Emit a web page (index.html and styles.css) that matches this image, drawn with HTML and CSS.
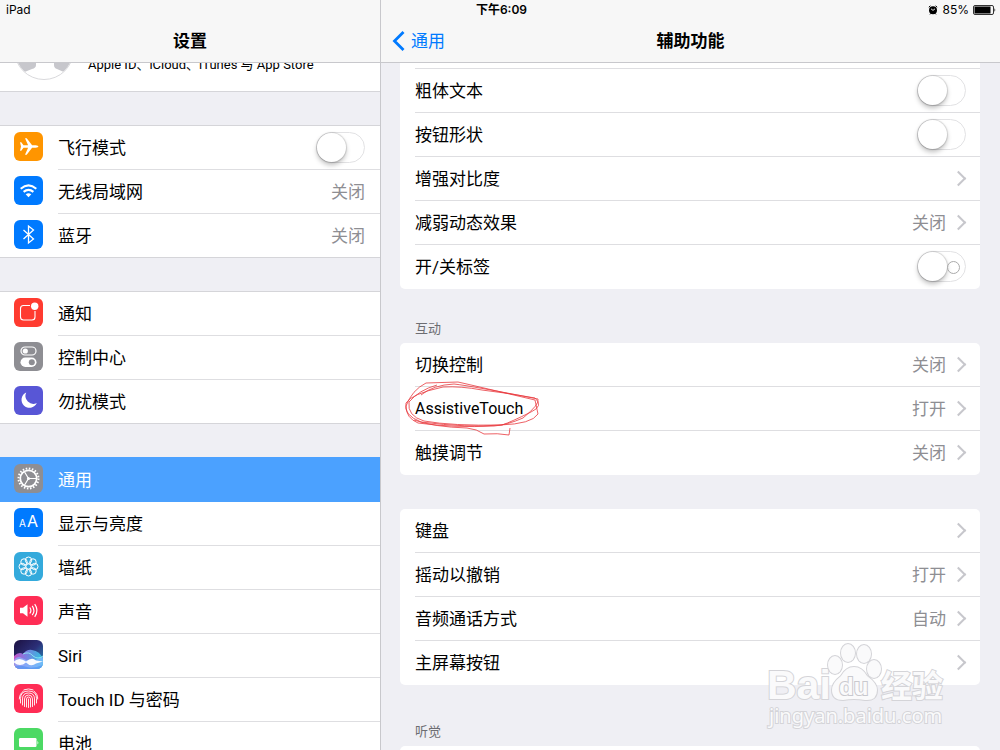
FILE: index.html
```
<!DOCTYPE html>
<html lang="zh-CN">
<head>
  <meta charset="UTF-8">
  <title>辅助功能</title>
  <link rel="stylesheet" href="styles.css">
</head>
<body>

  <!-- 状态栏 -->
  <div class="status-bar">
    <span>iPad</span>
    <time class="status-time">下午6:09</time>
    <div class="status-right">
      <svg width="10" height="10" viewBox="0 0 10 10"><circle cx="5" cy="5.2" r="4"/><path d="M.8 2.2L2.4.8M9.200 2.200L7.600.8M2 9.400l.8-1M8 9.400l-.8-1" stroke="#000"/><path d="M3 3.800L5 5.400l2-1.600" fill="none" stroke="#fff" stroke-width=".9"/></svg>
      <span>85%</span>
      <svg width="24" height="10" viewBox="0 0 24 10"><rect x=".5" y=".5" width="20" height="9" rx="1.500" fill="none" stroke="#000" stroke-width=".8"/><rect x="1.500" y="1.500" width="16" height="7"/><path d="M21.500 3q1.600 2 0 4z"/></svg>
    </div>
  </div>

  <!-- 左侧：设置列表 -->
  <nav class="sidebar">
    <header class="nav-bar">
      <h1>设置</h1>
    </header>
    <div class="scroll">
      <a href="#" class="account">
        <svg class="avatar" viewBox="0 0 60 60">
          <circle cx="30" cy="30" r="29" fill="#c7c7cc"/>
          <path d="M22 36h18v9q0 3 3 4l9 4q-8 7-22 7T8 53l10-4q4-1 4-4z" fill="#fff"/>
          <circle cx="30" cy="30" r="29.5" fill="none" stroke="#d9d9dc"/>
        </svg>
        <span>Apple ID、iCloud、iTunes 与 App Store</span>
      </a>

      <div class="group">
        <div class="item">
          <svg class="icon orange" viewBox="0 0 29 29"><path d="M6 10.200h1.300l2.200 3.100h4.600L11 6.300h1.700l5.400 7h3.600q2.700.2 2.800 1.200-.1 1-2.800 1.200h-3.600l-5.400 7H11l3.100-7H9.500l-2.200 3.100H6l1-4.300z" fill="#fff"/></svg>
          <label class="item-body">
            <span>飞行模式</span>
            <input type="checkbox" class="switch">
          </label>
        </div>
        <a href="#" class="item">
          <svg class="icon blue" viewBox="0 0 29 29"><g fill="none" stroke="#fff" stroke-width="2.1"><path d="M6.700 12.700q7.800-6.600 15.600 0"/><path d="M9.600 15.900q4.900-4 9.800 0"/></g><path d="M11.700 18.300q2.800-2 5.600 0l-2.800 2.900z" fill="#fff"/></svg>
          <span class="item-body"><span>无线局域网</span><span class="value">关闭</span></span>
        </a>
        <a href="#" class="item">
          <svg class="icon blue" viewBox="0 0 29 29"><path d="M9.500 10l10 9-5 4V6l5 4-10 9" fill="none" stroke="#fff" stroke-width="1.300"/></svg>
          <span class="item-body"><span>蓝牙</span><span class="value">关闭</span></span>
        </a>
      </div>

      <div class="group">
        <a href="#" class="item">
          <svg class="icon red" viewBox="0 0 29 29"><path d="M16 7.500H9.500q-3 0-3 3V19q0 3 3 3H18q3 0 3-3v-6" fill="none" stroke="#fff" stroke-width="1.100"/><circle cx="20.700" cy="8.300" r="3.700" fill="#fff"/></svg>
          <span class="item-body"><span>通知</span></span>
        </a>
        <a href="#" class="item">
          <svg class="icon gray" viewBox="0 0 29 29"><rect x="7" y="5" width="15" height="8" rx="4" fill="none" stroke="#fff" stroke-width="1.200"/><circle cx="11.300" cy="9" r="2.600" fill="#fff"/><rect x="6.500" y="15.500" width="16" height="9.500" rx="4.750" fill="#fff"/><circle cx="17.800" cy="20.200" r="3" fill="#8e8e93"/></svg>
          <span class="item-body"><span>控制中心</span></span>
        </a>
        <a href="#" class="item">
          <svg class="icon purple" viewBox="0 0 29 29"><path d="M12.200 6.500a8 8 0 1 0 10.600 10.600A8 8 0 0 1 12.200 6.500z" fill="#fff"/></svg>
          <span class="item-body"><span>勿扰模式</span></span>
        </a>
      </div>

      <div class="group general">
        <a href="#" class="item selected">
          <svg class="icon gray" viewBox="0 0 29 29"><g fill="none" stroke="#fff"><circle cx="14.500" cy="14.500" r="10" stroke-width="2" stroke-dasharray="1.550 1.592"/><circle cx="14.500" cy="14.500" r="8.200" stroke-width="1.700"/><path d="M14.500 14.500h7.500M14.500 14.500L10.600 8M14.500 14.500L10.600 21" stroke-width="1.200"/></g><circle cx="14.500" cy="14.500" r="1.500" fill="#fff"/></svg>
          <span class="item-body"><span>通用</span></span>
        </a>
        <a href="#" class="item">
          <svg class="icon blue" viewBox="0 0 29 29"><text x="5" y="19" font-size="10" class="glyph">A</text><text x="13" y="19" font-size="16" class="glyph">A</text></svg>
          <span class="item-body"><span>显示与亮度</span></span>
        </a>
        <a href="#" class="item">
          <svg class="icon cyan" viewBox="0 0 29 29"><g fill="none" stroke="#fff"><circle cx="14.500" cy="14.500" r="2.600"/><circle cx="14.500" cy="8.200" r="3.200"/><circle cx="19" cy="10" r="3.200"/><circle cx="20.800" cy="14.500" r="3.200"/><circle cx="19" cy="19" r="3.200"/><circle cx="14.500" cy="20.800" r="3.200"/><circle cx="10" cy="19" r="3.200"/><circle cx="8.200" cy="14.500" r="3.200"/><circle cx="10" cy="10" r="3.200"/></g></svg>
          <span class="item-body"><span>墙纸</span></span>
        </a>
        <a href="#" class="item">
          <svg class="icon pink" viewBox="0 0 29 29"><path d="M6 11.800h3l4.500-3.500v12.400L9 17.200H6z" fill="#fff"/><g fill="none" stroke="#fff" stroke-width="1.200"><path d="M15.800 11.500q2.200 3 0 6"/><path d="M18.200 9.800q3.400 4.700 0 9.400"/><path d="M20.700 8.200q4.600 6.300 0 12.600"/></g></svg>
          <span class="item-body"><span>声音</span></span>
        </a>
        <a href="#" class="item">
          <svg class="icon" viewBox="0 0 29 29">
            <defs>
              <linearGradient id="siriSky" x1="0" y1="0" x2="1" y2="1"><stop offset="0" stop-color="#1c1040"/><stop offset=".5" stop-color="#2b2f78"/><stop offset="1" stop-color="#2a9fc8"/></linearGradient>
              <linearGradient id="siriWave"><stop offset="0" stop-color="#e35bd8"/><stop offset=".4" stop-color="#8a8cf5"/><stop offset="1" stop-color="#2fd0ea"/></linearGradient>
            </defs>
            <rect width="29" height="29" fill="url(#siriSky)"/>
            <path d="M0 16q5-5 9-2 4-5 9-4 8 1 11 9v10H0z" fill="url(#siriWave)" opacity=".85"/>
            <path d="M0 20q3-5 8-2 10 6 21-2v13H0z" fill="#8ab8ff" opacity=".7"/>
            <path d="M9 14q6-3 10 2 5 4 10 0" fill="none" stroke="#8ff4f4" opacity=".8"/>
            <path d="M0 21.500q5-5 12 0 6-5 10-1l7 1-7 2q-5 4-10-1-6 5-12 0z" fill="#fff" opacity=".95"/>
            <path d="M0 26q7-1 13 1t16-2v4H0z" fill="#4b8ef0" opacity=".6"/>
          </svg>
          <span class="item-body"><span>Siri</span></span>
        </a>
        <a href="#" class="item">
          <svg class="icon pink" viewBox="0 0 29 29"><g fill="none" stroke="#fff" stroke-width=".9" stroke-linecap="round"><path d="M14.500 15v8.500M12.500 23v-8q0-2 2-2t2 2v8"/><path d="M10.500 22.500V15q0-4 4-4t4 4v7.500"/><path d="M8.500 21v-6q0-6 6-6t6 6v6"/><path d="M6.500 19v-4.500q0-7.500 8-7.500t8 7.500V19"/><path d="M5.300 15q0-5 4-7.800M10 5.800q4.500-1.800 9 0M20 7.200q4 2.800 3.700 7.800"/></g></svg>
          <span class="item-body"><span>Touch ID 与密码</span></span>
        </a>
        <a href="#" class="item">
          <svg class="icon green" viewBox="0 0 29 29"><rect x="5" y="10" width="17.500" height="9" rx="1.200" fill="#fff"/><path d="M23.500 12.500q1.500 2 0 4z" fill="#fff"/></svg>
          <span class="item-body"><span>电池</span></span>
        </a>
      </div>
    </div>
  </nav>

  <!-- 右侧：辅助功能 -->
  <main class="detail">
    <header class="nav-bar">
      <a href="#" class="back">
        <svg width="13" height="20" viewBox="0 0 13 20"><path d="M11.500 1L2.500 10l9 9" fill="none" stroke="#007aff" stroke-width="2.800"/></svg>
        通用
      </a>
      <h2>辅助功能</h2>
    </header>
    <div class="scroll">
      <div class="card first">
        <div class="row"></div>
        <label class="row"><span>粗体文本</span><input type="checkbox" class="switch"></label>
        <label class="row"><span>按钮形状</span><input type="checkbox" class="switch"></label>
        <a href="#" class="row more"><span>增强对比度</span></a>
        <a href="#" class="row more"><span>减弱动态效果</span><span class="value">关闭</span></a>
        <label class="row"><span>开/关标签</span><input type="checkbox" class="switch labeled"></label>
      </div>

      <h3>互动</h3>
      <div class="card">
        <a href="#" class="row more"><span>切换控制</span><span class="value">关闭</span></a>
        <a href="#" class="row more">
          <span class="latin">AssistiveTouch</span><span class="value">打开</span>
          <!-- 手绘红圈 -->
          <svg class="scribble" viewBox="0 0 136 56">
            <path d="M17 15Q29 5 50 4Q68 6 134 19Q136 24 119 38Q103 45 90 46Q50 48 14 43Q2 38 2 26Q8 10 22 3L54 2Q76 7 131 20L134 34Q128 44 96 45Q64 48 17 42Q-1 35 2 23Q7 14 39 7Q57 6 78 10"/>
            <path d="M78 10Q104 13 131 18Q140 26 127 32Q107 42 98 45Q48 46 20 41Q3 36 5 22Q15 10 33 5"/>
            <path d="M10 40Q30 47 63 48Q73 49 80 54Q94 53 105 55L106 48"/>
          </svg>
        </a>
        <a href="#" class="row more"><span>触摸调节</span><span class="value">关闭</span></a>
      </div>

      <div class="card spaced">
        <a href="#" class="row more"><span>键盘</span></a>
        <a href="#" class="row more"><span>摇动以撤销</span><span class="value">打开</span></a>
        <a href="#" class="row more"><span>音频通话方式</span><span class="value">自动</span></a>
        <a href="#" class="row more"><span>主屏幕按钮</span></a>
      </div>

      <h3 class="tall">听觉</h3>
      <div class="card">
        <div class="row"></div>
      </div>
    </div>
  </main>

  <!-- 水印 -->
  <svg class="watermark" width="190" height="90" viewBox="0 0 190 90">
    <g class="mark">
      <text x="5" y="58" font-size="41" class="bold">Bai</text>
      <ellipse cx="73" cy="24" rx="7" ry="9"/>
      <ellipse cx="86" cy="12" rx="7" ry="9"/>
      <ellipse cx="102" cy="13" rx="7" ry="9"/>
      <ellipse cx="112" cy="28" rx="7" ry="9"/>
      <path d="M92 26q8 0 13 9 10 7 10 14 0 11-12 10-11-2-22 0-11 0-11-10 0-7 9-14 5-9 13-9z"/>
      <text x="77" y="54" font-size="24" class="bold outline">du</text>
      <text x="119" y="56" font-size="31" class="cjk">经验</text>
      <text x="7" y="82" font-size="20" class="site">jingyan.baidu.com</text>
    </g>
  </svg>

</body>
</html>
```
FILE: styles.css
```
* {
  box-sizing: border-box;
}

body {
  margin: 0;
  height: 100vh;
  display: flex;
  position: relative;
  overflow: hidden;
  font-family: Roboto, "Noto Sans CJK SC", sans-serif;
  font-size: 17px;
  line-height: 24px;
  color: #000;
  background-color: #efeff4;
}

a {
  color: inherit;
  text-decoration: none;
}

h1, h2, h3 {
  margin: 0;
}

/* 状态栏 */
.status-bar {
  position: absolute;
  top: 0;
  left: 0;
  right: 0;
  z-index: 2;
  height: 20px;
  padding: 0 3px 0 6px;
  display: grid;
  grid-template-columns: 1fr auto 1fr;
  align-items: center;
  font-family: Inter, "Noto Sans CJK SC", sans-serif;
  font-size: 12px;
  line-height: 20px;
}

.status-time {
  font-weight: 600;
}

.status-right {
  display: flex;
  justify-content: flex-end;
  align-items: center;
  gap: 4px;
}

.sidebar {
  width: 38%;
  display: flex;
  flex-direction: column;
}

.detail {
  flex: 1;
  display: flex;
  flex-direction: column;
  border-left: 1px solid #c8c8cc;
}

.nav-bar {
  position: relative;
  z-index: 1;
  flex: none;
  height: 63px;
  padding-top: 20px;
  display: flex;
  align-items: center;
  justify-content: center;
  background-color: #f7f7f7;
  border-bottom: 1px solid #c8c8cc;
}

.nav-bar h1,
.nav-bar h2 {
  font-size: 17px;
  font-weight: 600;
}

.back {
  position: absolute;
  left: 11px;
  display: flex;
  align-items: center;
  gap: 6px;
  color: #007aff;
}

.scroll {
  flex: 1;
  min-height: 0;
  overflow: hidden;
}

/* 左侧列表 */
.account {
  display: flex;
  align-items: flex-end;
  gap: 14px;
  height: 89px;
  margin-top: -60px;
  padding: 0 14px 11px;
  background-color: #fff;
  border-bottom: 1px solid #d5d5d9;
  font-size: 13px;
}

.account span {
  margin-bottom: 3px;
}

.avatar {
  width: 60px;
  height: 60px;
}

.group {
  margin-top: 33px;
  background-color: #fff;
  border-top: 1px solid #d5d5d9;
}

.group.general {
  border-top-color: #4ba1ff;
}

.item {
  display: flex;
  align-items: center;
  gap: 15px;
  height: 44px;
  padding-left: 14px;
}

.item-body {
  flex: 1;
  align-self: stretch;
  display: flex;
  align-items: center;
  justify-content: space-between;
  padding-right: 15px;
  border-bottom: 1px solid #dedee1;
}

.item:last-child {
  border-bottom: 1px solid #d5d5d9;
}

.item:last-child .item-body {
  border-bottom: none;
}

.item.selected {
  background-color: #4ba1ff;
  color: #fff;
}

.item.selected .item-body {
  border-color: #4ba1ff;
}

.value {
  color: #8e8e93;
}

.icon {
  width: 29px;
  height: 29px;
  margin-bottom: 3px;
  border-radius: 6px;
}

.orange { background-color: #ff9500; }
.blue { background-color: #007aff; }
.red { background-color: #ff3b30; }
.gray { background-color: #8e8e93; }
.purple { background-color: #5856d6; }
.cyan { background-color: #34aadc; }
.pink { background-color: #ff2d55; }
.green { background-color: #4cd964; }

.glyph {
  fill: #fff;
  font-family: Inter, sans-serif;
}

/* 开关 */
.switch {
  appearance: none;
  position: relative;
  width: 49px;
  height: 31px;
  margin: 0;
  border: 1px solid #e2e2e4;
  border-radius: 16px;
  background-color: #fff;
}

.switch::before {
  content: "";
  display: block;
  width: 29px;
  height: 29px;
  border-radius: 50%;
  background-color: #fff;
  box-shadow: 0 0 1px 1px rgba(0, 0, 0, 0.12), 0 3px 5px rgba(0, 0, 0, 0.25);
}

.switch:checked {
  background-color: #4cd964;
}

.switch:checked::before {
  margin-left: 18px;
}

.switch.labeled::after {
  content: "";
  position: absolute;
  top: 9px;
  right: 5px;
  width: 11px;
  height: 11px;
  border: 1px solid #aaa;
  border-radius: 50%;
}

/* 右侧卡片 */
.card {
  margin: 0 20px 0 19px;
  background-color: #fff;
  border-radius: 5px;
}

.card.first {
  margin-top: -38px;
}

.card.spaced {
  margin-top: 34px;
}

.row {
  position: relative;
  display: flex;
  align-items: center;
  height: 44px;
  margin-left: 15px;
  padding-right: 14px;
  border-bottom: 1px solid #dedee1;
}

.row:last-child {
  border-bottom-color: transparent;
}

.row span:first-child {
  flex: 1;
}

.row .latin {
  font-size: 16px;
}

.row.more::after {
  content: "";
  width: 9px;
  height: 9px;
  margin: 0 2px 0 7px;
  border-top: 2px solid #c7c7cc;
  border-right: 2px solid #c7c7cc;
  transform: rotate(45deg);
}

h3 {
  height: 54px;
  padding: 28px 34px 0;
  font-size: 13px;
  font-weight: 400;
  color: #6d6d72;
}

h3.tall {
  height: 61px;
  padding-top: 35px;
}

.scribble {
  position: absolute;
  left: -11px;
  top: -7px;
  z-index: 1;
  width: 136px;
  height: 56px;
  fill: none;
  stroke: #e8383d;
  stroke-width: 0.8;
}

/* 水印 */
.watermark {
  position: absolute;
  right: 48px;
  bottom: 19px;
  pointer-events: none;
}

.mark {
  fill: #fafafb;
  stroke: #d4d4d8;
  stroke-width: 2;
  paint-order: stroke;
}

.mark .bold {
  font-family: "Liberation Sans", sans-serif;
  font-weight: 700;
}

.mark .outline {
  stroke: #c9c9ce;
}

.mark .cjk {
  font-family: "Noto Sans CJK SC", sans-serif;
  font-weight: 700;
}

.mark .site {
  font-family: "Noto Sans", sans-serif;
}
```
